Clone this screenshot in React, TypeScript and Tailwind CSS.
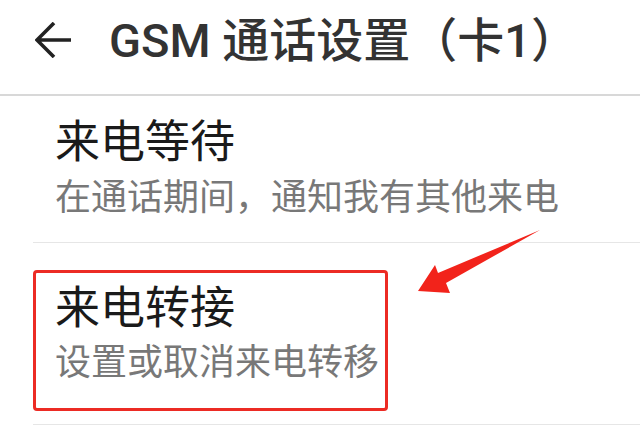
import React from "react";

const font = { fontFamily: '"Roboto", "Noto Sans CJK SC", sans-serif' };

export default function App() {
  return (
    <div
      className="relative w-[640px] h-[428px] overflow-hidden bg-white"
      style={font}
    >
      <div className="flex h-[94px] items-center pb-[14px] pl-[35px]">
        <svg width="36" height="36" viewBox="0 0 36 36" className="shrink-0">
          <path
            d="M36 18H2M19 1L2 18l17 17"
            fill="none"
            stroke="#222"
            strokeWidth="3.6"
          />
        </svg>
        <div className="ml-[38px] text-[47px] leading-[47px] font-medium text-[#333] whitespace-nowrap">
          GSM 通话设置（卡1）
        </div>
      </div>
      <div className="h-[2px] bg-[#d8d8d8]" />
      <div className="pl-[33px]">
        <div className="border-b border-[#e6e6e6] pl-[22px] pt-[24px] pb-[26px]">
          <div className="text-[45px] leading-[45px] text-[#1a1a1a] whitespace-nowrap">
            来电等待
          </div>
          <div className="mt-[15px] text-[36px] leading-[36px] text-[#787878] whitespace-nowrap">
            在通话期间，通知我有其他来电
          </div>
        </div>
        <div className="border-b border-[#e6e6e6] pt-[27px] pb-[13px]">
          <div className="w-[355px] rounded-[4px] border-[3px] border-[#ec2b24] pl-[19px] pt-[13px] pb-[27px]">
            <div className="text-[45px] leading-[45px] text-[#1a1a1a] whitespace-nowrap">
              来电转接
            </div>
            <div className="mt-[14px] text-[36px] leading-[36px] text-[#787878] whitespace-nowrap">
              设置或取消来电转移
            </div>
          </div>
        </div>
      </div>
      <svg
        className="pointer-events-none absolute inset-0"
        width="640"
        height="428"
        viewBox="0 0 640 428"
      >
        <polygon
          points="540,230 438,273 435,265 418,291 450,293 446,283"
          fill="#f2231b"
        />
      </svg>
    </div>
  );
}
